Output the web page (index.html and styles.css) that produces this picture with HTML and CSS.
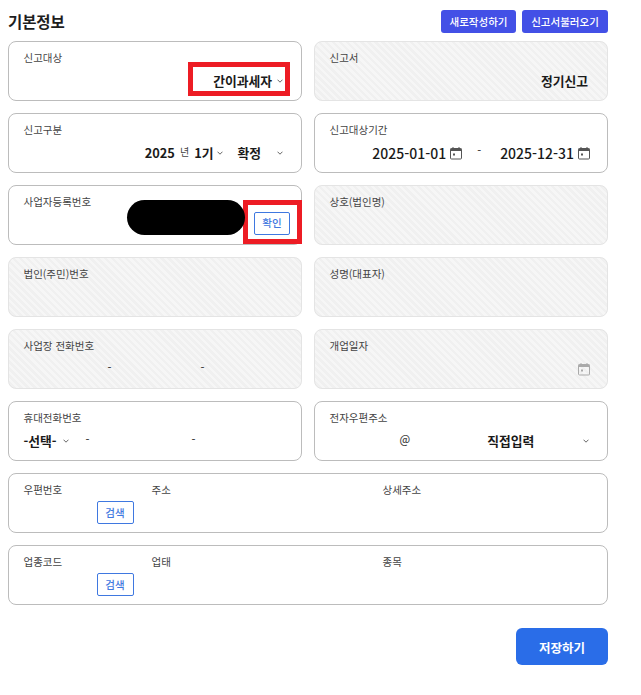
FILE: index.html
```html
<!DOCTYPE html>
<html lang="ko">
<head>
<meta charset="utf-8">
<title>기본정보</title>
<link rel="stylesheet" href="styles.css">
</head>
<body>
<svg class="defs" width="0" height="0" aria-hidden="true">
  <symbol id="cal" viewBox="0 0 14 14">
    <path d="M1.500 3.500A1 1 0 0 1 2.500 2.500H11.500A1 1 0 0 1 12.500 3.500V12A1 1 0 0 1 11.500 13H2.500A1 1 0 0 1 1.500 12Z" fill="none" stroke="currentColor"/>
    <rect x="1.500" y="2.500" width="11" height="2.500" fill="currentColor"/>
    <rect x="3.500" y="1" width="1" height="2" fill="currentColor"/>
    <rect x="9.500" y="1" width="1" height="2" fill="currentColor"/>
    <rect x="4" y="7.500" width="2" height="2" fill="currentColor"/>
  </symbol>
  <symbol id="chev" viewBox="0 0 6 4">
    <path d="M0.500 0.700 3 3.200 5.500 0.700" fill="none" stroke="currentColor" stroke-width="1"/>
  </symbol>
</svg>
<main class="page">
  <header class="head">
    <h1 class="title">기본정보</h1>
    <div class="head-actions">
      <button class="btn-solid">새로작성하기</button>
      <button class="btn-solid">신고서불러오기</button>
    </div>
  </header>

  <section class="grid">
    <div class="card">
      <div class="label">신고대상</div>
      <div class="row end pad-r1"><b class="val">간이과세자</b><svg class="chev"><use href="#chev"/></svg></div>
    </div>
    <div class="card off">
      <div class="label">신고서</div>
      <div class="row end pad-r2"><b class="val">정기신고</b></div>
    </div>

    <div class="card">
      <div class="label">신고구분</div>
      <div class="row end pad-r1">
        <b class="val">2025</b><span class="unit">년</span><b class="val">1기</b><svg class="chev gap-a"><use href="#chev"/></svg>
        <b class="val gap-b">확정</b><svg class="chev gap-c"><use href="#chev"/></svg>
      </div>
    </div>
    <div class="card">
      <div class="label">신고대상기간</div>
      <div class="row end pad-r3">
        <b class="val date">2025-01-01</b><svg class="cal"><use href="#cal"/></svg>
        <span class="dash dash-date">-</span>
        <b class="val date">2025-12-31</b><svg class="cal"><use href="#cal"/></svg>
      </div>
    </div>

    <div class="card">
      <div class="label">사업자등록번호</div>
      <div class="row end pad-r4"><button class="btn-line">확인</button></div>
    </div>
    <div class="card off"><div class="label">상호(법인명)</div></div>

    <div class="card off"><div class="label">법인(주민)번호</div></div>
    <div class="card off"><div class="label">성명(대표자)</div></div>

    <div class="card off">
      <div class="label">사업장 전화번호</div>
      <div class="row"><span class="dash tel-a">-</span><span class="dash tel-b">-</span></div>
    </div>
    <div class="card off">
      <div class="label">개업일자</div>
      <div class="row end pad-r3"><svg class="cal faded"><use href="#cal"/></svg></div>
    </div>

    <div class="card">
      <div class="label">휴대전화번호</div>
      <div class="row">
        <b class="val">-선택-</b><svg class="chev sel-chev"><use href="#chev"/></svg>
        <span class="dash mob-a">-</span><span class="dash mob-b">-</span>
      </div>
    </div>
    <div class="card">
      <div class="label">전자우편주소</div>
      <div class="row">
        <span class="dash at">@</span><b class="val direct">직접입력</b><svg class="chev mail-chev"><use href="#chev"/></svg>
      </div>
    </div>

    <div class="card wide">
      <div class="cols">
        <div class="col-code"><div class="label">우편번호</div><button class="btn-line search">검색</button></div>
        <div class="col-main"><div class="label">주소</div></div>
        <div class="col-sub"><div class="label">상세주소</div></div>
      </div>
    </div>
    <div class="card wide">
      <div class="cols">
        <div class="col-code"><div class="label">업종코드</div><button class="btn-line search">검색</button></div>
        <div class="col-main"><div class="label">업태</div></div>
        <div class="col-sub"><div class="label">종목</div></div>
      </div>
    </div>
  </section>

  <footer class="foot"><button class="btn-save">저장하기</button></footer>
</main>
<div class="mark mark-a"></div>
<div class="mark mark-b"></div>
<div class="blob"></div>
</body>
</html>
```
FILE: styles.css
```css
* { box-sizing: border-box; }
html, body { margin: 0; padding: 0; background: #fff; }
body { font-family: "Noto Sans CJK KR", "Noto Sans", sans-serif; color: #1c1c1c; position: relative; height: 695px; overflow: hidden; }
.defs { position: absolute; }
.page { width: 600px; margin-left: 8px; }
.head { display: flex; justify-content: space-between; align-items: flex-end; height: 41px; padding-bottom: 8px; }
.title { margin: 0 0 -1px 0; font-size: 15.500px; line-height: 26px; font-weight: 700; letter-spacing: -0.100px; color: #1e1e1e; }
.head-actions { display: flex; gap: 6px; }
.btn-solid { height: 23px; border: 0; border-radius: 3px; background: #4350e6; color: #fff; font: 500 10.500px/23px "Noto Sans CJK KR", sans-serif; padding: 0 8px; }
.head-actions .btn-solid:first-child { width: 75px; }
.head-actions .btn-solid:last-child { width: 86px; }

.grid { display: grid; grid-template-columns: 294px 294px; column-gap: 12px; row-gap: 12px; grid-auto-rows: 60px; }
.card { border: 1px solid #bcbcbc; border-radius: 8px; padding: 8px 15px 0 14.500px; background: #fff; overflow: hidden; }
.card.off { border-color: #e4e4e4; background-color: #f4f4f4; background-image: repeating-linear-gradient(45deg, #f6f6f6 0 2.500px, #f0f0f0 2.500px 5px); }
.card.wide { grid-column: 1 / -1; }
.label { font-size: 10.500px; line-height: 16px; color: #444; }

.row { display: flex; align-items: center; height: 22px; margin-top: 4px; }
.row.end { justify-content: flex-end; }
.pad-r1 { padding-right: 3px; }
.pad-r2 { padding-right: 4px; }
.pad-r3 { padding-right: 1px; }
.pad-r4 { margin-top: 2px; margin-right: -4px; }
.val { font-size: 12.800px; font-weight: 700; color: #1a1a1a; line-height: 22px; }
.date { font-size: 14px; font-weight: 500; }
.unit { font-size: 10px; color: #444; margin: -4px 5px 0 5px; }
.chev { width: 6px; height: 4px; margin-left: 5px; color: #666; flex: none; }
.gap-a { margin-left: 4px; }
.gap-b { margin-left: 14px; }
.gap-c { margin-left: 16px; }
.cal { width: 14px; height: 14px; margin-left: 3px; color: #555; flex: none; }
.cal.faded { color: #aaa; }
.dash { font-size: 11px; font-weight: 500; color: #444; margin-top: -4px; }
.dash-date { margin: -6px 19px 0 14px; }
.tel-a { margin-left: 84px; }
.tel-b { margin-left: 89px; }
.sel-chev { margin-left: 6px; }
.mob-a { margin-left: 17px; }
.mob-b { margin-left: 102px; }
.at { margin-left: 70px; }
.direct { margin-left: 77px; }
.mail-chev { margin-left: 49px; }

.btn-line { background: #fff; border: 1px solid #3f78e0; border-radius: 2px; color: #3f78e0; font: 500 10.500px/20px "Noto Sans CJK KR", sans-serif; padding: 0; width: 36px; height: 23px; }
.cols { display: flex; }
.col-code { width: 128px; display: flex; flex-direction: column; }
.col-main { width: 231px; }
.col-sub { flex: 1; }
.search { align-self: flex-end; margin: 3px 18px 0 0; width: 37px; }

.foot { display: flex; justify-content: flex-end; margin-top: 23px; }
.btn-save { width: 92px; height: 37px; border: 0; border-radius: 6px; background: #2a6de8; color: #fff; font: 700 12.500px/37px "Noto Sans CJK KR", sans-serif; }

.mark { position: absolute; border: 5px solid #ed1c24; }
.mark-a { left: 188px; top: 62px; width: 102px; height: 34px; }
.mark-b { left: 243px; top: 200px; width: 59px; height: 44px; }
.blob { position: absolute; left: 127px; top: 200px; width: 118px; height: 35px; border-radius: 18px; background: #000; }
```
